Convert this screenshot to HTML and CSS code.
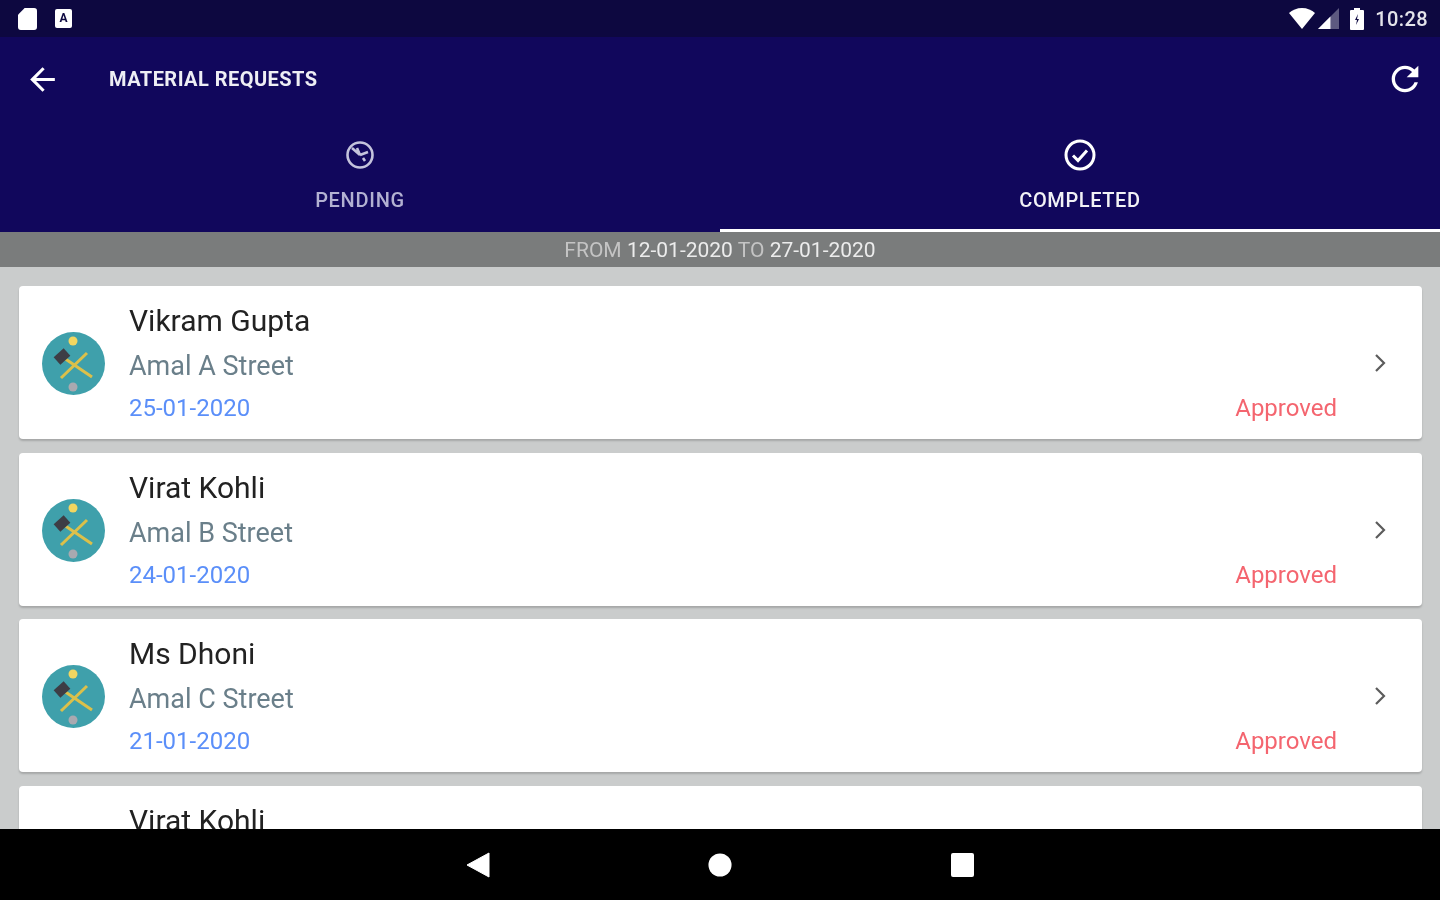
FILE: index.html
```html
<!DOCTYPE html>
<html lang="en">
<head>
  <meta charset="UTF-8" />
  <title>Material Requests</title>
  <link rel="stylesheet" href="styles.css">
</head>
<body>
  <!-- Icon shared by every request row -->
  <svg class="defs" width="0" height="0">
    <symbol id="tools" viewBox="0 0 63 63">
      <circle cx="31.5" cy="31.5" r="31.5" fill="#3fa0ab" />
      <circle cx="31" cy="9" r="4.5" fill="#f2d660" />
      <circle cx="31" cy="55" r="4.5" fill="#a9a9b0" />
      <path d="M19 46 45 21M22 26 50 45" stroke="#dcc04a" stroke-width="3" fill="none" />
      <path d="M15 29 25 20" stroke="#3d3d45" stroke-width="10" fill="none" />
    </symbol>
    <symbol id="chevron" viewBox="0 0 12 20">
      <path d="M2 2 10 10 2 18" stroke="#5c5c5c" stroke-width="2.2" fill="none" />
    </symbol>
  </svg>

  <div class="screen">
    <!-- Android status bar -->
    <div class="status-bar">
      <svg class="st-sd" viewBox="0 0 20 23"><path d="M7 0h10a3 3 0 0 1 3 3v17a3 3 0 0 1-3 3H3a3 3 0 0 1-3-3V7z" fill="#fff" /></svg>
      <span class="st-keyboard">A</span>
      <span class="spacer"></span>
      <svg class="st-wifi" viewBox="0 0 26 21"><path d="M13 21 0 5C3 2 8 0 13 0s10 2 13 5z" fill="#fff" /></svg>
      <svg class="st-signal" viewBox="0 0 22 22">
        <path d="M0 22 22 0v22z" fill="#5d5a80" />
        <path d="M0 22 13 9v13z" fill="#fff" />
      </svg>
      <svg class="st-battery" viewBox="0 0 14 22">
        <path d="M4 0h6v2h3a1 1 0 0 1 1 1v18a1 1 0 0 1-1 1H1a1 1 0 0 1-1-1V3a1 1 0 0 1 1-1h3z" fill="#fff" />
        <path d="M8 6 5 12h2l-1 5 3-6H7z" fill="#0d0840" />
      </svg>
      <span class="st-time">10:28</span>
    </div>

    <!-- App bar and tabs -->
    <header class="app-bar">
      <div class="toolbar">
        <svg class="tb-back" viewBox="0 0 24 24"><path d="M20 11H7.83l5.59-5.59L12 4l-8 8 8 8 1.41-1.41L7.83 13H20v-2z" /></svg>
        <h1>MATERIAL REQUESTS</h1>
        <svg class="tb-refresh" viewBox="0 0 24 24"><path d="M17.65 6.35C16.2 4.9 14.21 4 12 4c-4.42 0-7.99 3.58-7.99 8s3.57 8 7.99 8c3.73 0 6.84-2.55 7.73-6h-2.08c-.82 2.33-3.04 4-5.65 4-3.31 0-6-2.69-6-6s2.69-6 6-6c1.66 0 3.14.69 4.22 1.78L13 11h7V4l-2.35 2.35z" /></svg>
      </div>
      <div class="tabs">
        <div class="tab">
          <svg class="tab-icon" viewBox="0 0 32 32">
            <circle cx="16" cy="16" r="12.5" />
            <path d="M8 9 16 16M16 16 13 9M16 16 24 13M21 22 19 19" />
          </svg>
          <span>PENDING</span>
        </div>
        <div class="tab active">
          <svg class="tab-icon" viewBox="0 0 32 32">
            <circle cx="16" cy="16" r="14" />
            <path d="M9 16.5 14 21.5 23 11.5" />
          </svg>
          <span>COMPLETED</span>
        </div>
      </div>
    </header>

    <div class="date-range">FROM <b>12-01-2020</b> TO <b>27-01-2020</b></div>

    <!-- Requests -->
    <main class="list">
      <div class="card">
        <svg class="avatar"><use href="#tools" /></svg>
        <div class="info">
          <div class="name">Vikram Gupta</div>
          <div class="street">Amal A Street</div>
          <div class="date">25-01-2020</div>
        </div>
        <div class="meta">
          <svg class="chevron"><use href="#chevron" /></svg>
          <div class="state">Approved</div>
        </div>
      </div>
      <div class="card">
        <svg class="avatar"><use href="#tools" /></svg>
        <div class="info">
          <div class="name">Virat Kohli</div>
          <div class="street">Amal B Street</div>
          <div class="date">24-01-2020</div>
        </div>
        <div class="meta">
          <svg class="chevron"><use href="#chevron" /></svg>
          <div class="state">Approved</div>
        </div>
      </div>
      <div class="card">
        <svg class="avatar"><use href="#tools" /></svg>
        <div class="info">
          <div class="name">Ms Dhoni</div>
          <div class="street">Amal C Street</div>
          <div class="date">21-01-2020</div>
        </div>
        <div class="meta">
          <svg class="chevron"><use href="#chevron" /></svg>
          <div class="state">Approved</div>
        </div>
      </div>
      <div class="card">
        <div class="info no-avatar">
          <div class="name">Virat Kohli</div>
        </div>
      </div>
    </main>

    <!-- Android navigation bar -->
    <nav class="nav-bar">
      <svg viewBox="0 0 24 26"><path d="M23 1v24L1 13z" fill="#fff" stroke="#fff" stroke-linejoin="round" /></svg>
      <svg viewBox="0 0 26 26"><circle cx="13" cy="13" r="12.5" fill="#fff" /></svg>
      <svg viewBox="0 0 24 26"><rect x="1" y="1" width="23" height="24" rx="2" fill="#fff" /></svg>
    </nav>
  </div>
</body>
</html>
```

FILE: styles.css
```css
/* Page */
* {
  box-sizing: border-box;
}

html, body {
  margin: 0;
  height: 100%;
  overflow: hidden;
}

body {
  font-family: Roboto, "Liberation Sans", sans-serif;
}

.defs {
  display: block;
  height: 0;
}

.screen {
  display: flex;
  flex-direction: column;
  height: 900px;
  background-color: #cacccc;
  filter: blur(0.7px);
}

/* Status bar */
.status-bar {
  display: flex;
  align-items: center;
  flex: none;
  height: 37px;
  padding: 0 12px 0 18px;
  background-color: #0d0840;
  color: #fff;
}

.spacer {
  flex: 1;
}

.st-sd {
  width: 19px;
  height: 22px;
}

.st-keyboard {
  width: 17px;
  height: 19px;
  margin-left: 18px;
  border-radius: 2px;
  background-color: #fff;
  color: #0d0840;
  font-size: 12px;
  font-weight: 700;
  line-height: 19px;
  text-align: center;
}

.st-wifi {
  width: 26px;
  height: 21px;
}

.st-signal {
  width: 21px;
  height: 21px;
  margin-left: 3px;
}

.st-battery {
  width: 14px;
  height: 22px;
  margin-left: 11px;
}

.st-time {
  margin-left: 11px;
  font-size: 20px;
  font-weight: 500;
  letter-spacing: 0.4px;
  color: #e4e4ea;
}

/* App bar */
.app-bar {
  flex: none;
  height: 195px;
  background-color: #11075c;
  color: #fff;
}

.toolbar {
  display: flex;
  align-items: center;
  height: 84px;
  padding: 0 15px 0 24px;
}

.toolbar svg {
  flex: none;
  fill: #fff;
}

.tb-back {
  width: 37px;
  height: 37px;
}

.toolbar h1 {
  flex: 1;
  margin: 0 0 0 48px;
  font-size: 20px;
  font-weight: 700;
  letter-spacing: 0.45px;
  color: #eeeef4;
}

.tb-refresh {
  width: 40px;
  height: 40px;
}

.tabs {
  display: flex;
  height: 111px;
}

.tab {
  display: flex;
  flex: 1;
  flex-direction: column;
  align-items: center;
  padding-top: 18px;
  font-size: 20px;
  font-weight: 500;
  letter-spacing: 0.7px;
  color: #b3b1d2;
}

.tab.active {
  border-bottom: 3px solid #fff;
  letter-spacing: 0.6px;
  color: #f2f2f6;
}

.tab-icon {
  width: 32px;
  height: 32px;
  margin-bottom: 17px;
  fill: none;
  stroke: #c4c3dc;
  stroke-width: 2.6;
}

.tab.active .tab-icon {
  stroke: #fff;
  stroke-width: 3;
}

/* Date range */
.date-range {
  flex: none;
  height: 35px;
  background-color: #7a7c7c;
  color: #c4c4c4;
  font-size: 21px;
  line-height: 36px;
  text-align: center;
}

.date-range b {
  font-weight: 400;
  color: #ececec;
}

/* Request list */
.list {
  display: flex;
  flex: 1;
  flex-direction: column;
  gap: 13.5px;
  min-height: 0;
  overflow: hidden;
  padding: 19px 18px 0 19px;
}

.card {
  display: flex;
  flex: none;
  align-items: center;
  height: 153px;
  padding: 0 36px 0 23px;
  border-radius: 4px;
  background-color: #fff;
  box-shadow: 0 2px 2px rgba(0, 0, 0, 0.18);
}

.avatar {
  flex: none;
  width: 63px;
  height: 63px;
  margin-top: 2px;
}

.info {
  flex: 1;
  margin-left: 24px;
  padding-top: 13px;
  height: 100%;
}

.info.no-avatar {
  margin-left: 87px;
}

.name {
  height: 44px;
  font-size: 30px;
  line-height: 44px;
  color: #222;
}

.street {
  height: 46px;
  font-size: 27px;
  line-height: 46px;
  color: #6a7f8a;
}

.date {
  height: 38px;
  font-size: 24px;
  line-height: 38px;
  color: #5b8ff9;
}

.meta {
  display: flex;
  flex-direction: column;
  align-items: flex-end;
  height: 100%;
  padding-top: 67px;
}

.chevron {
  width: 12px;
  height: 20px;
}

.state {
  margin-top: 16px;
  margin-right: 49px;
  font-size: 24px;
  line-height: 38px;
  color: #f4656f;
}

/* Navigation bar */
.nav-bar {
  display: flex;
  flex: none;
  align-items: center;
  justify-content: center;
  gap: 218px;
  height: 71px;
  background-color: #000;
}

.nav-bar svg {
  width: 24px;
  height: 26px;
}
```
